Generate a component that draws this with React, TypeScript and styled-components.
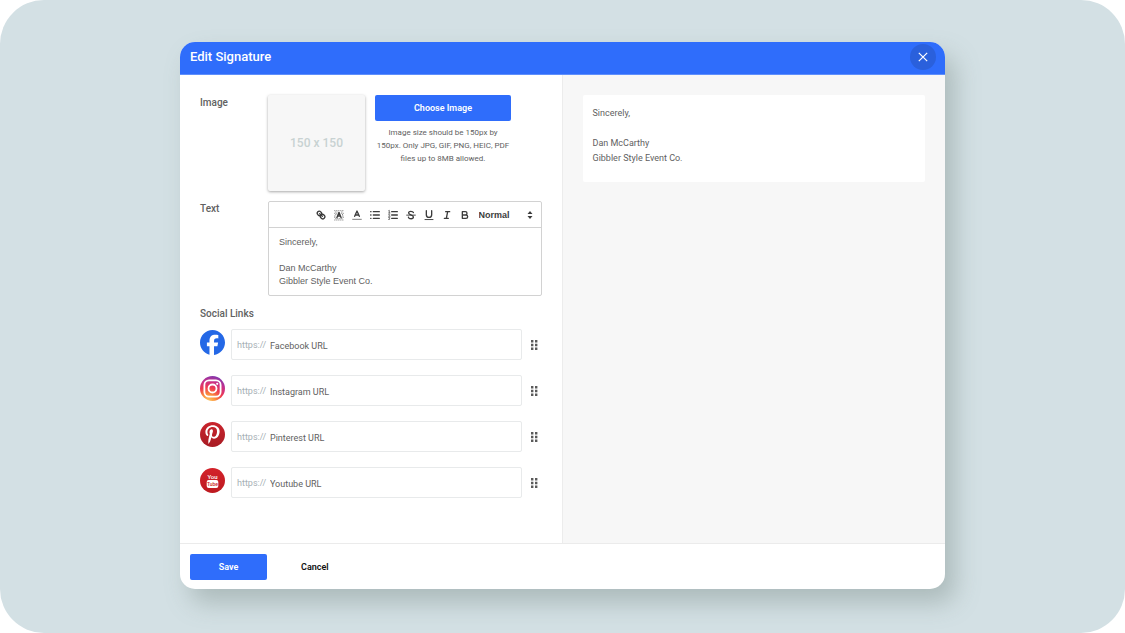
import React, { useState } from 'react';
import styled, { createGlobalStyle } from 'styled-components';
import { FaFacebook, FaPinterestP } from 'react-icons/fa6';

const GlobalStyle = createGlobalStyle`
  *, *::before, *::after { box-sizing: border-box; }
  body {
    margin: 0;
    background: #fff;
    font-family: Roboto, "Liberation Sans", sans-serif;
    color: #616161;
  }
  button, input, select, textarea { font-family: inherit; margin: 0; }
`;

const Backdrop = styled.main`
  min-height: 100vh;
  padding: 42px 16%;
  background: #d3e0e4;
  border-radius: 44px;
`;

const Dialog = styled.section`
  display: flex;
  flex-direction: column;
  background: #fff;
  border-radius: 15px;
  overflow: hidden;
  box-shadow: 10px 14px 24px rgba(120, 135, 130, 0.42);
`;

const Header = styled.header`
  display: flex;
  align-items: center;
  justify-content: space-between;
  height: 33px;
  padding: 0 9px 3px 10px;
  background: #2f6dfb;
  border-bottom: 1px solid #5f8ffb;
`;

const Title = styled.h1`
  margin: 0;
  font-size: 13px;
  line-height: 16px;
  font-weight: 500;
  color: #fff;
`;

const CloseButton = styled.button`
  display: flex;
  align-items: center;
  justify-content: center;
  width: 26px;
  height: 26px;
  padding: 0;
  border: 0;
  border-radius: 50%;
  background: #2a60dc;
  color: #fff;
  cursor: pointer;
`;

const Body = styled.div`
  display: grid;
  grid-template-columns: 1fr 1fr;
`;

const FormPane = styled.div`
  padding: 20px 20px 45px;
  border-right: 1px solid #ececec;
`;

const PreviewPane = styled.aside`
  padding: 20px;
  background: #f7f7f7;
`;

const FormRow = styled.div`
  display: grid;
  grid-template-columns: 68px 1fr;
  margin-bottom: 10px;
`;

const Label = styled.label`
  font-size: 10px;
  line-height: 16px;
  font-weight: 500;
`;

const ImageRow = styled.div`
  display: flex;
  align-items: flex-start;
  gap: 10px;
`;

const ImageSlot = styled.div`
  display: flex;
  align-items: center;
  justify-content: center;
  width: 97px;
  height: 96px;
  background: #f7f7f7;
  border-radius: 2px;
  box-shadow: 0 1px 3px rgba(0, 0, 0, 0.35);
  font-size: 12px;
  font-weight: 500;
  color: #c8d2d2;
`;

const ImageControls = styled.div`
  width: 136px;
  text-align: center;
`;

const PrimaryButton = styled.button<{ $width: string }>`
  width: ${({ $width }) => $width};
  height: 26px;
  padding: 0;
  border: 0;
  border-radius: 2px;
  background: #2f6dfb;
  color: #fff;
  font-size: 9px;
  font-weight: 600;
  cursor: pointer;
`;

const TextButton = styled.button`
  padding: 0;
  border: 0;
  background: none;
  color: #111;
  font-size: 9px;
  font-weight: 600;
  cursor: pointer;
`;

const Hint = styled.p`
  margin: 5px -4px 0;
  font-size: 8px;
  line-height: 13px;
`;

const Editor = styled.div`
  border: 1px solid #d2d2d2;
  border-radius: 2px;
  font-family: "Liberation Sans", sans-serif;
`;

const Toolbar = styled.div`
  display: flex;
  align-items: center;
  justify-content: flex-end;
  height: 26px;
  padding-right: 7px;
  border-bottom: 1px solid #d2d2d2;
`;

const ToolButton = styled.button`
  display: flex;
  align-items: center;
  justify-content: center;
  width: 18px;
  height: 18px;
  padding: 0;
  border: 0;
  background: none;
  color: #3c3c3c;
  cursor: pointer;
`;

const ToolIcon = styled.svg`
  width: 12px;
  height: 12px;
  fill: none;
  stroke: currentColor;
  stroke-width: 2;
  stroke-linecap: round;
  stroke-linejoin: round;
`;

const FormatPicker = styled.div`
  display: grid;
  grid-template-columns: 1fr 8px;
  align-items: center;
  width: 55px;
  margin-left: 5px;
  color: #3c3c3c;
`;

const FormatSelect = styled.select`
  grid-area: 1 / 1 / 2 / 3;
  appearance: none;
  width: 100%;
  padding: 0;
  border: 0;
  background: none;
  color: inherit;
  font-size: 9px;
  line-height: 16px;
  font-weight: 700;
`;

const PickerArrows = styled.svg`
  grid-area: 1 / 2 / 2 / 3;
  width: 8px;
  height: 10px;
  pointer-events: none;
`;

const EditorText = styled.textarea`
  display: block;
  width: 100%;
  height: 67px;
  padding: 8px 10px;
  border: 0;
  outline: 0;
  resize: none;
  background: none;
  color: #616161;
  font-size: 9px;
  line-height: 13px;
`;

const SectionTitle = styled.h2`
  margin: 0 0 7px;
  font-size: 10px;
  line-height: 16px;
  font-weight: 500;
`;

const LinkList = styled.ul`
  display: grid;
  gap: 15px;
  margin: 0;
  padding: 0;
  list-style: none;
`;

const LinkRow = styled.li`
  display: flex;
  align-items: center;
  gap: 6px;
`;

const Badge = styled.span<{ $background: string }>`
  display: flex;
  align-items: center;
  justify-content: center;
  width: 25px;
  height: 25px;
  margin-bottom: 4px;
  border-radius: 50%;
  background: ${({ $background }) => $background};
  color: #fff;
`;

const UrlField = styled.label`
  display: flex;
  flex: 1;
  align-items: center;
  gap: 4px;
  height: 31px;
  padding: 0 5px;
  border: 1px solid #e8eaeb;
  border-radius: 2px;
  font-size: 9px;
`;

const Scheme = styled.span`
  width: 29px;
  color: #a6b0b5;
`;

const UrlInput = styled.input`
  flex: 1;
  min-width: 0;
  padding: 2px 0 0;
  border: 0;
  outline: 0;
  background: none;
  font-size: 9px;
  color: #616161;
  &::placeholder { color: #616161; opacity: 1; }
`;

const DragHandle = styled.button`
  display: flex;
  justify-content: flex-start;
  width: 14px;
  padding: 0 0 0 2px;
  border: 0;
  background: none;
  color: #5a5a5a;
  cursor: grab;
`;

const PreviewCard = styled.div`
  min-height: 87px;
  padding: 11px 10px;
  background: #fff;
  border-radius: 2px;
  font-size: 9px;
  line-height: 15px;
  white-space: pre-line;
`;

const Footer = styled.footer`
  display: flex;
  align-items: center;
  gap: 34px;
  height: 46px;
  padding: 0 10px;
  border-top: 1px solid #ebebeb;
`;

const tools: { name: string; icon: React.ReactNode }[] = [
  {
    name: 'Link',
    icon: (
      <>
        <path d="M7 7 11 11" />
        <path d="M8.9 4.58a3.48 3.48 0 0 1 .36 4.68A3.48 3.48 0 0 1 4.58 8.9C3.19 7.5 2.04 6.4 4.22 4.22S7.5 3.19 8.9 4.58Z" />
        <path d="M13.42 9.1a3.48 3.48 0 0 0-4.68-.36 3.48 3.48 0 0 0 .36 4.68c1.4 1.4 2.5 2.54 4.68.36S14.82 10.5 13.42 9.1Z" />
      </>
    ),
  },
  {
    name: 'Background colour',
    icon: (
      <>
        <path
          d="M2 2.5H16.5M3.5 4.5H7M12.5 4.5H15M2 6.5H6M12.5 6.5H16.5M3.5 8.5H5M13.5 8.5H15M2 10.5H5M14 10.5H16.5M2 12.5H4M14.5 12.5H16.5M3.5 14.5H15M2 16.5H16.5"
          strokeWidth="1.5"
          strokeLinecap="butt"
          strokeDasharray="1.5 1.5"
          opacity="0.7"
        />
        <path d="M5.8 13 9 5 12.2 13M7 10.5H11" />
      </>
    ),
  },
  {
    name: 'Text colour',
    icon: (
      <>
        <path d="M5.5 11 9 3 12.5 11M6.4 9H11.6" />
        <path d="M2.5 15.5H15.5" strokeWidth="1.4" opacity="0.7" />
      </>
    ),
  },
  {
    name: 'Bulleted list',
    icon: <path d="M6.5 4H15.5M6.5 9H15.5M6.5 14H15.5M2.5 4H3M2.5 9H3M2.5 14H3" />,
  },
  {
    name: 'Numbered list',
    icon: (
      <>
        <path d="M7 4H15.5M7 9H15.5M7 14H15.5" />
        <path d="M2.5 2.5 3.5 2V6M2.5 6H4.5M2.4 8.2C3.5 7.4 4.6 8.2 4 9.2L2.4 11H4.6M2.4 12.8H4.2L3.4 14.2C5 14.2 4.8 16.4 2.4 15.8" strokeWidth="1" />
      </>
    ),
  },
  {
    name: 'Strikethrough',
    icon: (
      <>
        <path d="M12.6 5.4C11.8 3.2 5.4 2.4 5.4 6 5.4 9 12.6 8.4 12.6 12 12.6 15.6 5.8 15.2 5.2 12.4" />
        <path d="M2.5 9.2H15.5" strokeWidth="1.4" />
      </>
    ),
  },
  {
    name: 'Underline',
    icon: (
      <>
        <path d="M5 2.5V8.5A4 4 0 0 0 13 8.5V2.5" />
        <path d="M3 15.8H15" strokeWidth="1.4" />
      </>
    ),
  },
  { name: 'Italic', icon: <path d="M7 4H13M5 14H11M8 14 10 4" /> },
  {
    name: 'Bold',
    icon: <path d="M5 4H9.5A2.5 2.5 0 0 1 9.5 9H5ZM5 9H10.5A2.5 2.5 0 0 1 10.5 14H5Z" />,
  },
];

const InstagramMark = () => (
  <svg width="25" height="25" viewBox="0 0 25 25" fill="none" stroke="#fff" strokeWidth="1.8">
    <rect x="4.4" y="4.4" width="16.2" height="16.2" rx="4.6" />
    <circle cx="12.5" cy="12.5" r="4" />
    <circle cx="17.2" cy="7.8" r="1.1" fill="#fff" stroke="none" />
  </svg>
);

const YoutubeMark = () => (
  <svg width="25" height="25" viewBox="0 0 25 25" fontFamily="Roboto, sans-serif" fontWeight="500" textAnchor="middle">
    <text x="12.5" y="11" fontSize="6" fill="#fff">You</text>
    <rect x="6.7" y="12" width="11.6" height="8" rx="2" fill="#fff" />
    <text x="12.5" y="18" fontSize="5" fill="#cc1d24">Tube</text>
  </svg>
);

const networks = [
  { name: 'Facebook', background: '#fff', mark: <FaFacebook size={25} color="#2468e6" /> },
  {
    name: 'Instagram',
    background:
      'radial-gradient(circle at 32% 105%, #fdd26a 0%, #fb8f3c 25%, #ee3a50 48%, #c8308a 68%, #6a39b8 92%)',
    mark: <InstagramMark />,
  },
  { name: 'Pinterest', background: 'linear-gradient(#c9242d, #a81c24)', mark: <FaPinterestP size={19} /> },
  { name: 'Youtube', background: 'linear-gradient(#d3222a, #bd1a20)', mark: <YoutubeMark /> },
];

export default function App() {
  const [signature, setSignature] = useState('Sincerely,\n\nDan McCarthy\nGibbler Style Event Co.');

  return (
    <>
      <GlobalStyle />
      <Backdrop>
        <Dialog role="dialog" aria-labelledby="dialog-title">
          <Header>
            <Title id="dialog-title">Edit Signature</Title>
            <CloseButton type="button" aria-label="Close">
              <svg width="10" height="10" viewBox="0 0 10 10" stroke="currentColor" strokeWidth="1.2">
                <path d="M0.8 0.8 9.2 9.2M9.2 0.8 0.8 9.2" />
              </svg>
            </CloseButton>
          </Header>

          <Body>
            <FormPane>
              <FormRow>
                <Label htmlFor="choose-image">Image</Label>
                <ImageRow>
                  <ImageSlot>150 x 150</ImageSlot>
                  <ImageControls>
                    <PrimaryButton id="choose-image" type="button" $width="100%">
                      Choose Image
                    </PrimaryButton>
                    <Hint>
                      Image size should be 150px by
                      <br />
                      150px. Only JPG, GIF, PNG, HEIC, PDF
                      <br />
                      files up to 8MB allowed.
                    </Hint>
                  </ImageControls>
                </ImageRow>
              </FormRow>

              <FormRow>
                <Label htmlFor="signature-text">Text</Label>
                <Editor>
                  <Toolbar>
                    {tools.map((tool) => (
                      <ToolButton key={tool.name} type="button" aria-label={tool.name}>
                        <ToolIcon viewBox="0 0 18 18">{tool.icon}</ToolIcon>
                      </ToolButton>
                    ))}
                    <FormatPicker>
                      <FormatSelect aria-label="Text size" defaultValue="Normal">
                        <option>Normal</option>
                        <option>Large</option>
                      </FormatSelect>
                      <PickerArrows viewBox="0 0 8 10" fill="currentColor">
                        <path d="M4 1 6.5 4H1.5ZM4 9 1.5 6H6.5Z" />
                      </PickerArrows>
                    </FormatPicker>
                  </Toolbar>
                  <EditorText
                    id="signature-text"
                    value={signature}
                    spellCheck={false}
                    onChange={(event) => setSignature(event.target.value)}
                  />
                </Editor>
              </FormRow>

              <SectionTitle>Social Links</SectionTitle>
              <LinkList>
                {networks.map((network) => (
                  <LinkRow key={network.name}>
                    <Badge $background={network.background}>{network.mark}</Badge>
                    <UrlField>
                      <Scheme>https://</Scheme>
                      <UrlInput type="text" placeholder={`${network.name} URL`} />
                    </UrlField>
                    <DragHandle type="button" aria-label={`Move ${network.name}`}>
                      <svg width="8" height="12" viewBox="0 0 8 12" fill="currentColor">
                        <path d="M1 1H3.4V3.4H1ZM5 1H7.4V3.4H5ZM1 4.8H3.4V7.2H1ZM5 4.8H7.4V7.2H5ZM1 8.6H3.4V11H1ZM5 8.6H7.4V11H5Z" />
                      </svg>
                    </DragHandle>
                  </LinkRow>
                ))}
              </LinkList>
            </FormPane>

            <PreviewPane>
              <PreviewCard>{signature}</PreviewCard>
            </PreviewPane>
          </Body>

          <Footer>
            <PrimaryButton type="button" $width="77px">
              Save
            </PrimaryButton>
            <TextButton type="button">Cancel</TextButton>
          </Footer>
        </Dialog>
      </Backdrop>
    </>
  );
}
